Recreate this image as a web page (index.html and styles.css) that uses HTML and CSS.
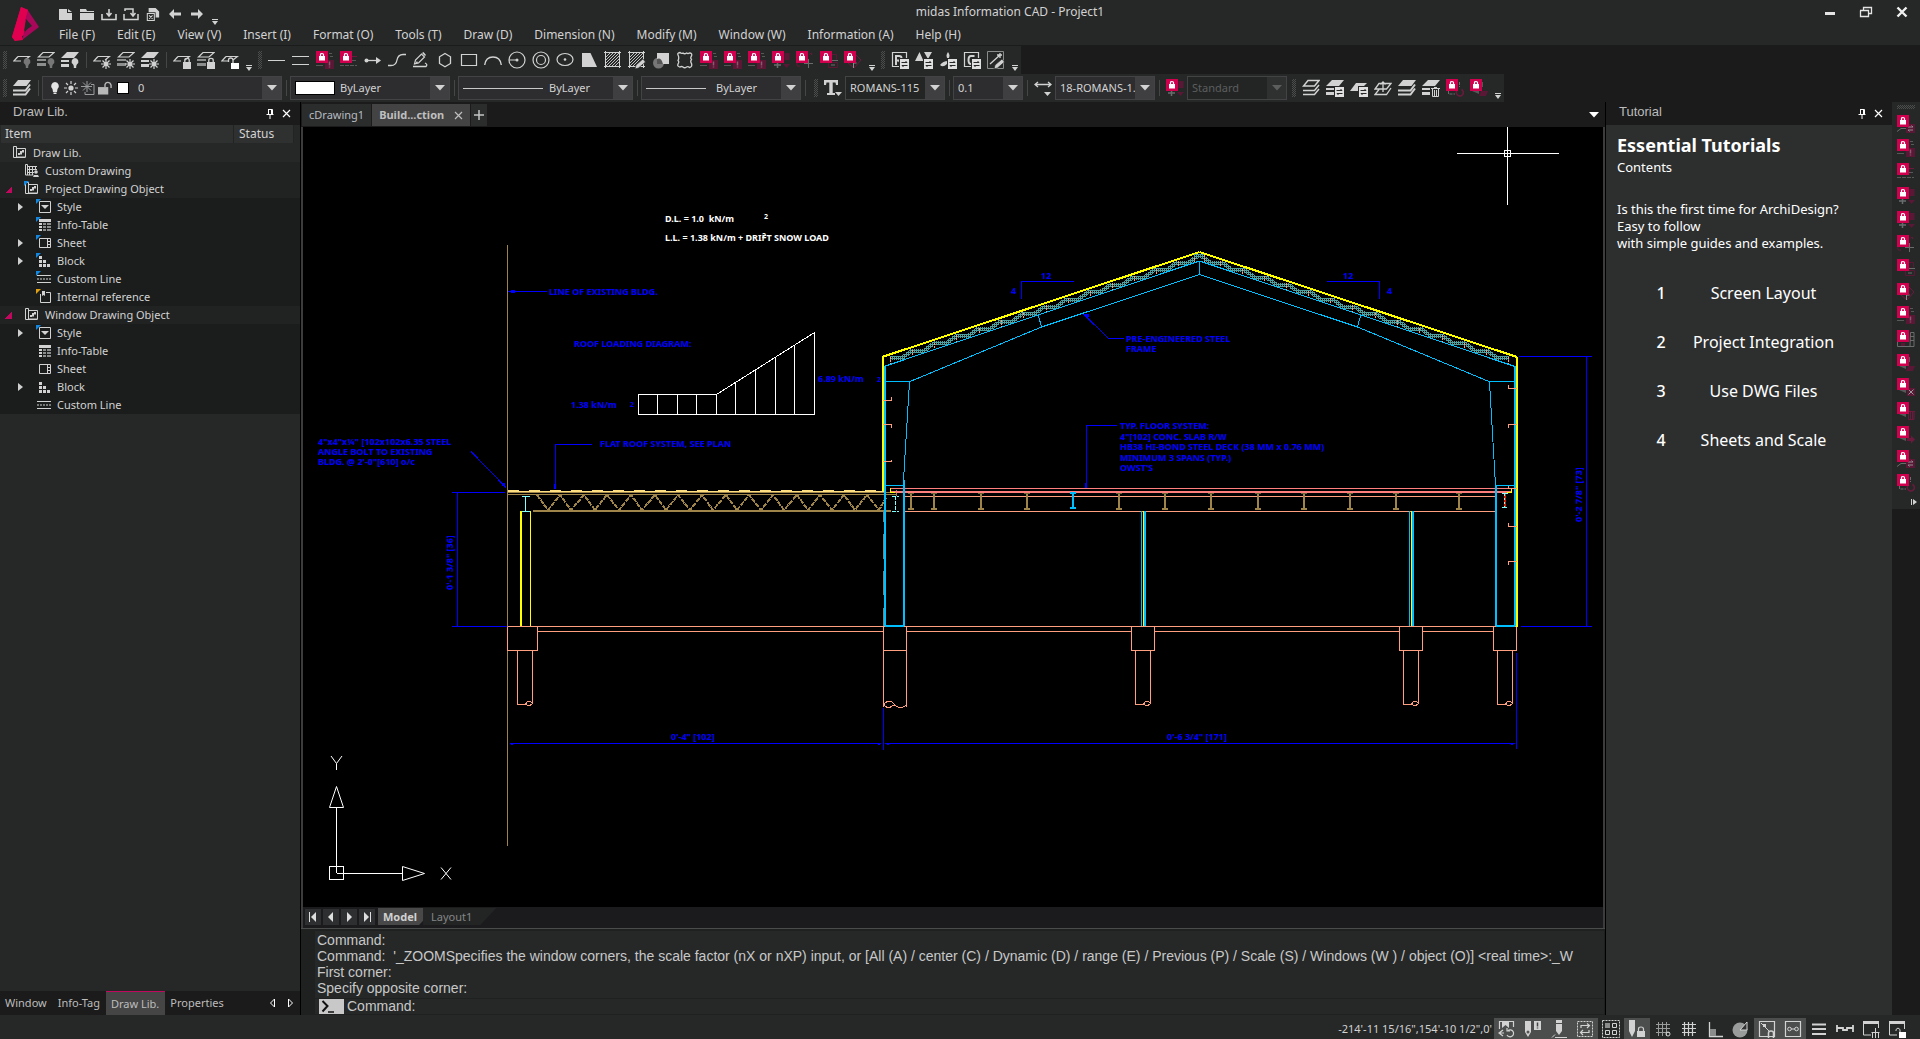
FILE: index.html
```html
<!DOCTYPE html>
<html lang="en">
<head>
<meta charset="utf-8">
<title>midas Information CAD - Project1</title>
<link rel="stylesheet" href="styles.css">
</head>
<body>
<svg class="defs" aria-hidden="true">
  <!-- generic glyphs -->
  <symbol id="down" viewBox="0 0 10 6"><path d="M0 0h10L5 5.500z" fill="currentColor"/></symbol>
  <symbol id="more" viewBox="0 0 6 6"><path d="M0 0h6v1H0zM0 2h6L3 6z" fill="currentColor"/></symbol>
  <symbol id="pin" viewBox="0 0 8 10"><path d="M2 0.500h4.500v5M2.500 0v5.500M0.500 5.500h7M4 6v4M5.500 1v4.500" fill="none" stroke="currentColor"/></symbol>
  <symbol id="x" viewBox="0 0 9 9"><path d="M1 1l7 7M8 1L1 8" fill="none" stroke="currentColor" stroke-width="1.200"/></symbol>
  <symbol id="lock" viewBox="0 0 12 12"><path d="M0 0h12v12H0z" fill="#d1004f"/><path d="M3 5h6v4.500H3z" fill="#fff"/><path d="M4.500 5V3.500q0-1 1.500-1t1.500 1V5" fill="none" stroke="#fff" stroke-width="1.200"/></symbol>

  <!-- quick access -->
  <symbol id="q-new" viewBox="0 0 16 14"><path d="M2 2h8v4h5v7H2zM11 2l4 3h-4z" fill="currentColor"/></symbol>
  <symbol id="q-open" viewBox="0 0 16 14"><path d="M1 2h6l1 2h7v1H1zM1 6h14v7H1z" fill="currentColor"/></symbol>
  <symbol id="q-save" viewBox="0 0 16 14"><path d="M1 7v5.500h14V7M8 2v6M5.500 6L8 9l2.500-3M4 12" fill="none" stroke="currentColor" stroke-width="1.600"/></symbol>
  <symbol id="q-saveas" viewBox="0 0 16 14"><path d="M1 7v5.500h14V7M2 4V2h8v6M7.500 6L10 9l2.500-3" fill="none" stroke="currentColor" stroke-width="1.500"/></symbol>
  <symbol id="q-close" viewBox="0 0 16 16"><path d="M3 1h8l4 4v7h-4V6H3z" fill="currentColor"/><path d="M1.500 7.500h8v8h-8zM3.500 9.500l4 4M7.500 9.500l-4 4" fill="none" stroke="currentColor" stroke-width="1.200"/></symbol>
  <symbol id="q-left" viewBox="0 0 16 14"><path d="M2 7l5-5v3.500h7v3H7V12z" fill="currentColor"/></symbol>
  <symbol id="q-right" viewBox="0 0 16 14"><path d="M14 7L9 2v3.500H2v3h7V12z" fill="currentColor"/></symbol>

  <!-- layer tools -->
  <symbol id="sheet" viewBox="0 0 18 18"><path d="M5 5.500h11.500L12 9M5 5.500L.8 10H8" fill="none" stroke="currentColor" stroke-width="1.200"/></symbol>
  <symbol id="stack" viewBox="0 0 18 18"><path d="M6 1.500h11L12 6H1.500z" fill="none" stroke="currentColor" stroke-width="1.200"/><path d="M0 8h9v2H0zM0 12h9v3H0z" fill="currentColor" opacity=".6"/></symbol>
  <symbol id="stackf" viewBox="0 0 18 18"><path d="M6 1h12l-5 6H0zM0 9h8v2H0zM0 13h8v3H0z" fill="currentColor"/></symbol>
  <symbol id="b-bulb" viewBox="0 0 18 18"><path d="M14 7a3.500 3.500 0 0 1 2 6.300l-.8 1.700v2h-2.400v-2l-.8-1.700A3.500 3.500 0 0 1 14 7z" fill="currentColor"/></symbol>
  <symbol id="b-sun" viewBox="0 0 18 18"><path d="M13 8v10M8 13h10M9.500 9.500l7 7M16.500 9.500l-7 7" stroke="currentColor" stroke-width="1.200"/><circle cx="13" cy="13" r="2" fill="currentColor"/></symbol>
  <symbol id="b-lock" viewBox="0 0 18 18"><path d="M10 11h8v7h-8z" fill="currentColor"/><path d="M11.800 11V9q0-1.700 2.200-1.700T16.200 9v2" fill="none" stroke="currentColor" stroke-width="1.300"/></symbol>
  <symbol id="b-unlock" viewBox="0 0 18 18"><path d="M10 12h8v6h-8z" fill="#fff"/><path d="M7.500 11V9q0-2 2.200-2T12 9v3" fill="none" stroke="currentColor" stroke-width="1.300"/></symbol>
  <symbol id="b-swap" viewBox="0 0 18 18"><path d="M8 7h10v11H8z" fill="#262828"/><path d="M9 8h9v10H9z" fill="#e0e0e0"/><path d="M10.500 11.500H16l-1.500-1.500M16.500 14.500h-5.500l1.500 1.500" fill="none" stroke="#262828"/></symbol>
  <symbol id="b-trash" viewBox="0 0 18 18"><path d="M9 9.500h9M12 8.500h3M10.500 10v7.500h6V10M12.500 11v6M14.500 11v6" fill="none" stroke="currentColor"/></symbol>
  <symbol id="layers" viewBox="0 0 18 18"><path d="M5 1h13l-4.500 6H0z" fill="currentColor"/><path d="M0 11.500h12.500L17 5.500M0 15.500h12.500L17 9.500" fill="none" stroke="currentColor" stroke-width="2"/></symbol>
  <symbol id="layerso" viewBox="0 0 18 18"><path d="M6 1.500h11L12.500 7H1.500zM1 11.500h11.500L17 6M1 15.500h11.500L17 10" fill="none" stroke="currentColor" stroke-width="1.500"/></symbol>
  <symbol id="layersup" viewBox="0 0 18 18"><path d="M5 4.500h12L12.500 10H1zM5 10.500L1 15.500h11.500L17 9M9 13V3M6.500 5.500L9 3l2.500 2.500" fill="none" stroke="currentColor" stroke-width="1.300"/></symbol>

  <!-- draw tools -->
  <symbol id="d-line" viewBox="0 0 18 18"><path d="M0 9.500h17" stroke="currentColor"/></symbol>
  <symbol id="d-dbl" viewBox="0 0 18 18"><path d="M0 5.500h17M0 13.500h17" stroke="currentColor" stroke-width="1.200"/></symbol>
  <symbol id="d-ray" viewBox="0 0 18 18"><path d="M1 9.500h14" stroke="currentColor" stroke-width="1.300"/><circle cx="2.500" cy="9.500" r="2" fill="currentColor"/><path d="M12 6l5 3.500-5 3.500z" fill="currentColor"/></symbol>
  <symbol id="d-spline" viewBox="0 0 18 18"><path d="M0 14.500h3q5 0 6-5.500t6-5.500h3" fill="none" stroke="currentColor" stroke-width="1.300"/></symbol>
  <symbol id="d-free" viewBox="0 0 18 18"><path d="M1 15.500h13q2-2-1-3.500" fill="none" stroke="currentColor" stroke-width="1.300"/><path d="M2.500 13l1-4 6-6 3 3-6 6z" fill="none" stroke="currentColor" stroke-width="1.200"/><path d="M3 13l2-3 1 2zM10 2l1.500-1 2.500 3-1 1z" fill="currentColor"/></symbol>
  <symbol id="d-hex" viewBox="0 0 18 18"><path d="M9 2.500l5.500 3.300v6.700L9 15.800l-5.500-3.300V5.800z" fill="none" stroke="currentColor" stroke-width="1.300"/></symbol>
  <symbol id="d-rect" viewBox="0 0 18 18"><path d="M1.500 3.500h15v11h-15z" fill="none" stroke="currentColor" stroke-width="1.200"/></symbol>
  <symbol id="d-arc" viewBox="0 0 18 18"><path d="M.7 14q1-8 8.300-8t8.300 8" fill="none" stroke="currentColor" stroke-width="1.400"/></symbol>
  <symbol id="d-circ" viewBox="0 0 18 18"><circle cx="9" cy="9" r="8" fill="none" stroke="currentColor" stroke-width="1.200"/><path d="M1 9h7" stroke="currentColor"/><circle cx="9" cy="9" r="1.500" fill="currentColor"/></symbol>
  <symbol id="d-donut" viewBox="0 0 18 18"><circle cx="9" cy="9" r="8" fill="none" stroke="currentColor" stroke-width="1.200"/><circle cx="9" cy="9" r="4.500" fill="none" stroke="currentColor" stroke-width="1.200"/></symbol>
  <symbol id="d-ell" viewBox="0 0 18 18"><ellipse cx="9" cy="8.500" rx="8" ry="6" fill="none" stroke="currentColor" stroke-width="1.200"/><circle cx="9" cy="8.500" r="1.300" fill="currentColor"/></symbol>
  <symbol id="d-solid" viewBox="0 0 18 18"><path d="M2 2h8.500L17 16H2z" fill="currentColor"/></symbol>
  <symbol id="d-hatch" viewBox="0 0 18 18"><path d="M1.500 1.500h14v14h-14zM0 1.500h17M0 15.500h17M1.500 0v17M15.500 0v17" fill="none" stroke="currentColor"/><path d="M2 6l4-4M2 9l7-7M2 12l10-10M2 15L15 2M5 15L15 5M8 15l7-7M11 15l4-4" stroke="currentColor" stroke-width=".9"/></symbol>
  <symbol id="d-pen" viewBox="0 0 18 18"><path d="M7 18l1-4 7-6 2.500 3-7 6z" fill="currentColor" stroke="#262828" stroke-width=".7"/></symbol>
  <symbol id="d-wipe" viewBox="0 0 18 18"><circle cx="6.500" cy="12" r="5.500" fill="#777"/><path d="M5 2h12v11H5z" fill="currentColor"/><path d="M5 13V8q4-2 6 5z" fill="#555"/></symbol>
  <symbol id="d-cloud" viewBox="0 0 18 18"><path d="M2 4q-1-2 2-2.500 1.500 1.500 3 .5 1.500 1.500 3.500 0 1.500 1 3 0 3 0 2 3-1.500 2 0 3.500-1.500 2 0 4 1 3.500-2 4-1.500-1.500-3-.5-2 1.500-3.500 0-1.500-1-3 0Q1 15.500 2 13q1.500-2 0-3.500Q3.500 7 2 4z" fill="none" stroke="currentColor" stroke-width="1.300"/></symbol>

  <!-- unavailable tools: a dimmed glyph under the lock badge -->
  <symbol id="g-excl" viewBox="0 0 18 18"><path d="M0 14.500h7M14 5.500h3M13 2.500h3" stroke="#575959"/><path d="M9 9h9v9H9z" fill="#5b1736"/><path d="M13.500 10.500v4M13.500 15.500v1" stroke="#8d5870" stroke-width="1.500"/></symbol>
  <symbol id="g-line" viewBox="0 0 18 18"><path d="M12 5.500h5" stroke="#6b1a3d"/><path d="M12 9.500h5M0 14.500h17" stroke="#575959" stroke-dasharray="4 1"/></symbol>
  <symbol id="g-down" viewBox="0 0 18 18"><path d="M12.500 2h5v7h-5zM11 13h7l-3.500 4z" fill="#5b1736"/><path d="M5.500 12v5M2 14h7" stroke="#6a6c6c" stroke-width="1.500"/></symbol>
  <symbol id="g-plus" viewBox="0 0 18 18"><path d="M13.500 3q3-2 2 1M1 12q-1 4 3 3" fill="none" stroke="#6b1a3d"/><path d="M12.500 8v9M8 12.500h9" stroke="#6a6c6c"/></symbol>
  <symbol id="g-box" viewBox="0 0 18 18"><path d="M12 3.500h4.500v5M8.500 11.500h9v5h-9z" fill="none" stroke="#5b1736"/><path d="M12 9.500h6M11 14h4" stroke="#6a6c6c"/></symbol>
  <symbol id="g-dia" viewBox="0 0 18 18"><path d="M12 4l5 5-7 8-6-5" fill="none" stroke="#6b1a3d"/><path d="M9.500 17v-5h3" fill="none" stroke="#8a8c8c"/></symbol>
  <symbol id="g-grid" viewBox="0 0 18 18"><path d="M13.500 2.500h3.500v14h-4zM13 6.500h4M13 10.500h4M0.500 12v4.500h13" fill="none" stroke="#6a6c6c"/><path d="M4 13h4v3H4z" fill="#5b1736"/></symbol>
  <symbol id="g-tag" viewBox="0 0 18 18"><path d="M2 12l7 3v-3z" fill="#575959"/><path d="M11 12h7l-2 5H9z" fill="#5b1736"/><path d="M12.500 3v5" stroke="#575959"/></symbol>
  <symbol id="g-x" viewBox="0 0 18 18"><path d="M2 12l7 3v-3z" fill="#575959"/><path d="M10 10h8v8h-8z" fill="#5b1736"/><path d="M11.500 11.500l5 5M16.500 11.500l-5 5" stroke="#9a9c9c"/></symbol>
  <symbol id="g-trash" viewBox="0 0 18 18"><path d="M2 12l7 3v-3z" fill="#575959"/><path d="M11.500 10v7.500h5.500V10M10 9.500h8M13.500 10v7M15.500 10v7" fill="none" stroke="#6b1a3d"/></symbol>
  <symbol id="g-right" viewBox="0 0 18 18"><path d="M2 12l7 3v-3z" fill="#575959"/><path d="M10 12h4V9.500l4 4-4 4V15h-4z" fill="#6b1a3d"/></symbol>
  <symbol id="g-swap" viewBox="0 0 18 18"><path d="M0 16.500l4-3h5" fill="none" stroke="#6a6c6c"/><path d="M9 9h9v9H9z" fill="#5b1736"/><path d="M11 12h5l-1.500-1.500M16 15h-5l1.500 1.500" fill="none" stroke="#8d8f8f"/></symbol>
  <symbol id="g-undo" viewBox="0 0 18 18"><path d="M2.500 12v3H9M13.500 3v5" fill="none" stroke="#6a6c6c" stroke-dasharray="3 1"/><path d="M11 11.500a3.500 3.500 0 1 0 4.500-1" fill="none" stroke="#6b1a3d" stroke-width="1.500"/></symbol>

  <!-- style tools -->
  <symbol id="s-r" viewBox="0 0 18 18"><path d="M1.500 1.500h14v14h-14z" fill="none" stroke="currentColor" stroke-width="1.200"/><path d="M5 14V5h3q2.500 0 2.500 2.300T8 9.500H5M8 9.500l2.500 4.500" fill="none" stroke="currentColor" stroke-width="2"/></symbol>
  <symbol id="s-tri" viewBox="0 0 18 18"><path d="M0 10l4.500-9 4 9zM9 1h8l-4 7z" fill="currentColor"/></symbol>
  <symbol id="s-fan" viewBox="0 0 18 18"><path d="M9 1q3 4 0 7-3-3 0-7zM9 10l-1 3q-4 4-7 1 3-4 8-4z" fill="currentColor"/></symbol>
  <symbol id="s-c" viewBox="0 0 18 18"><path d="M1.500 1.500h14v14h-14z" fill="none" stroke="currentColor" stroke-width="1.200"/><path d="M11.500 5H8q-2.500 0-2.500 4T8 13h2" fill="none" stroke="currentColor" stroke-width="2"/></symbol>
  <symbol id="s-edit" viewBox="0 0 18 18"><path d="M.5.500h16v17H.5z" fill="none" stroke="#8a8c8c"/><path d="M3 13L13 4M10 4h5M13 2v5" stroke="currentColor" stroke-width="1.300"/></symbol>
  <symbol id="t-text" viewBox="0 0 18 18"><path d="M0 1h14v5h-2l-.5-2.500H8.700V14H11v2H3v-2h2.300V3.500H2.500L2 6H0z" fill="currentColor"/><path d="M11 13h7l-3.500 4z" fill="currentColor"/></symbol>
  <symbol id="t-dim" viewBox="0 0 18 18"><path d="M1 5.500h16M4 3L1 5.500 4 8M14 3l3 2.500L14 8" fill="none" stroke="currentColor" stroke-width="1.300"/><path d="M10 13h7l-3.500 4z" fill="currentColor"/></symbol>

  <!-- layer state -->
  <symbol id="l-bulb" viewBox="0 0 10 14"><path d="M5 1a4 4 0 0 1 2.500 7L7 11H3l-.5-3A4 4 0 0 1 5 1zM3.500 11.500h3V13h-3z" fill="#e4e4e4"/></symbol>
  <symbol id="l-sun" viewBox="0 0 14 14"><circle cx="7" cy="7" r="2.600" fill="currentColor"/><path d="M7 0v3M7 11v3M0 7h3M11 7h3M2 2l2 2M10 10l2 2M12 2l-2 2M2 12l2-2" stroke="currentColor" stroke-width="1.200"/></symbol>
  <symbol id="l-frz" viewBox="0 0 14 14"><path d="M6 0v11M0 5.500h11M2 1.500l8 8M10 1.500l-8 8M10 3.500h3v10H4V11" fill="none" stroke="#9a9c9c"/></symbol>
  <symbol id="l-unl" viewBox="0 0 15 14"><path d="M0 6h11v8H0z" fill="#b8b8b8"/><path d="M7.500 6V3.500Q8 1 10.500 1T14 4v3" fill="none" stroke="#b8b8b8" stroke-width="1.500"/></symbol>

  <!-- tree -->
  <symbol id="n-lib" viewBox="0 0 14 14"><path d="M3.500 2.500h9v8.500h-9zM.5.500h3V11M.5.500v11h12" fill="none" stroke="currentColor"/><path d="M5 9V7h2V5h2V4h2v2.500H9v2H7V9z" fill="currentColor"/></symbol>
  <symbol id="n-cust" viewBox="0 0 14 14"><path d="M.5.500h2V11M.5.500v10.500h8M3 2.500h9M4.500 2v9M7.500 2v9M10.500 2v4M3 5.500h9M3 8.500h6" fill="none" stroke="currentColor"/><circle cx="11" cy="8" r="1.800" fill="currentColor"/><path d="M8 13l1-2h4l1 2z" fill="currentColor"/></symbol>
  <symbol id="n-style" viewBox="0 0 14 14"><path d="M2.500 1.500h11v11h-11z" fill="none" stroke="currentColor"/><path d="M4 5h8L8 9z" fill="currentColor"/></symbol>
  <symbol id="n-table" viewBox="0 0 14 14"><path d="M2 1h12v3H2zM2 5h3v2H2zM2 8h3v2H2zM2 11h3v2H2z" fill="currentColor"/><path d="M6 5h3v2H6zM10 5h4v2h-4zM6 8h3v2H6zM10 8h4v2h-4zM6 11h3v2H6zM10 11h4v2h-4z" fill="#8c8e8e"/></symbol>
  <symbol id="n-sheet" viewBox="0 0 14 14"><path d="M2.500 2.500h11v9h-11zM10.500 2v10M10.500 5.500h3M10.500 8.500h3" fill="none" stroke="currentColor"/></symbol>
  <symbol id="n-block" viewBox="0 0 14 14"><path d="M2 2h3v3H2zM2 6h3v3H2zM6 6h3v3H6zM2 10h3v3H2zM6 10h3v3H6zM10 10h3v3h-3z" fill="currentColor"/></symbol>
  <symbol id="n-line" viewBox="0 0 14 14"><path d="M0 3.500h14M0 10.500h14" stroke="currentColor"/><path d="M0 7h14" stroke="currentColor" stroke-dasharray="2 1"/></symbol>
  <symbol id="n-ref" viewBox="0 0 14 14"><path d="M9 2.500h4.500v10h-10V4" fill="none" stroke="currentColor"/><path d="M5 1h3v5L6.500 5 5 6z" fill="currentColor"/></symbol>

  <!-- status bar -->
  <symbol id="z1" viewBox="0 0 18 18"><path d="M4 1h7v7L7.500 5 4 8zM1 13h6" fill="currentColor"/><path d="M1.500 9V1.500H4M11 1.500h4.500V7M5 10L1 13l4 3M1 13h5M9 15a3.500 3.500 0 1 0 1-4.500M9 8v3h3" fill="none" stroke="currentColor" stroke-width="1.200"/></symbol>
  <symbol id="z2" viewBox="0 0 18 18"><path d="M1 1h6v11l-3 5-3-5zM10 1h7v9h-7z" fill="currentColor"/><circle cx="4" cy="12" r="1.500" fill="#555"/><path d="M13.500 2.500v4M13.500 7.500v1" stroke="#444" stroke-width="1.500"/></symbol>
  <symbol id="z3" viewBox="0 0 18 18"><path d="M6 0h6v3H6zM6 4h6v7l-3 4-3-4z" fill="currentColor"/><path d="M2 17.500l3-3M5 17.500h12" stroke="currentColor"/></symbol>
  <symbol id="z4" viewBox="0 0 18 18"><path d="M1.500 1.500h15v15h-15z" fill="none" stroke="currentColor" stroke-dasharray="2 1"/><path d="M5 8V5.500h8M11 3.500l2.500 2L11 8M13 10v2.500H5M7 10l-2.500 2.500L7 15" fill="none" stroke="currentColor" stroke-width="1.200"/></symbol>
  <symbol id="z5" viewBox="0 0 18 18"><path d="M.5.500h17v17H.5z" fill="none" stroke="currentColor" stroke-dasharray="2 1"/><path d="M3 3h5v5H3z" fill="#8a8c8c"/><path d="M10.500 3.500h4v4h-4zM3.500 10.500h4v4h-4zM10.500 10.500h4v4h-4z" fill="none" stroke="currentColor"/></symbol>
  <symbol id="z6" viewBox="0 0 18 18"><path d="M1 0h6v11l-3 6-3-6zM9 11h8v6H9z" fill="currentColor"/><path d="M10.500 11V9q0-2 2.500-2t2.500 2v2" fill="none" stroke="currentColor" stroke-width="1.200"/></symbol>
  <symbol id="z7" viewBox="0 0 18 18"><path d="M4.500 2v14M8.500 2v14M12.500 2v14M2 4.500h14M2 8.500h14M2 12.500h14" stroke="#9a9c9c"/><circle cx="14" cy="14" r="2" fill="none" stroke="currentColor"/></symbol>
  <symbol id="z8" viewBox="0 0 18 18"><path d="M4.500 2v14M8.500 2v14M12.500 2v14M2 4.500h14M2 8.500h14M2 12.500h14" stroke="currentColor" stroke-width="1.200"/></symbol>
  <symbol id="z9" viewBox="0 0 18 18"><path d="M3.500 2v14.500H17" fill="none" stroke="currentColor" stroke-width="1.300"/><path d="M4 9h6v7H4z" fill="#8a8c8c"/></symbol>
  <symbol id="z10" viewBox="0 0 18 18"><circle cx="8" cy="10" r="7.500" fill="#9a9c9c"/><path d="M8 10l7-8v8H8z" fill="#333" stroke="currentColor"/></symbol>
  <symbol id="z11" viewBox="0 0 18 18"><path d="M1.500 1.500h15v15h-15z" fill="none" stroke="currentColor" stroke-width="1.200"/><path d="M3 3l8 8" stroke="currentColor"/><path d="M5 4h3v3H5z" fill="currentColor"/><path d="M10.500 18v-5q0-2 2.500-2t2.500 2v5" fill="none" stroke="currentColor" stroke-width="1.500"/></symbol>
  <symbol id="z12" viewBox="0 0 18 18"><path d="M1.500 1.500h15v15h-15zM7 9h4" fill="none" stroke="currentColor" stroke-width="1.200"/><circle cx="5.500" cy="9" r="1.800" fill="none" stroke="currentColor"/><circle cx="12.500" cy="9" r="1.800" fill="none" stroke="currentColor"/></symbol>
  <symbol id="z13" viewBox="0 0 18 18"><path d="M2 4.500h14M2 9h14M2 14h14" stroke="currentColor" stroke-width="2"/></symbol>
  <symbol id="z14" viewBox="0 0 18 18"><path d="M1 5v7M1 8h6v2h4V8h6M17 5v7" fill="none" stroke="currentColor" stroke-width="1.800"/></symbol>
  <symbol id="z15" viewBox="0 0 18 18"><path d="M1 1h16v3H1z" fill="currentColor"/><path d="M1.500 3v12H9M16.500 3v5M13.500 8v4M9.500 12.500h8M10.500 13v5M13.500 13v5M16.500 13v5" fill="none" stroke="currentColor"/></symbol>
  <symbol id="z16" viewBox="0 0 18 18"><path d="M1 1h16v3H1z" fill="currentColor"/><path d="M1.500 3v12H9M16.500 3v6M8 11V9.500q2-3 4 0V12" fill="none" stroke="currentColor"/><path d="M11 12h7v6h-7z" fill="#fff"/></symbol>
</svg>

<header class="titlebar">
  <svg class="logo" viewBox="0 0 28 34"><path d="M9 0l7 3-4 25-9 6-3-4z" fill="#e0004f"/><path d="M15 2l12 18-17 13 2-7 6-7-5-6z" fill="#a8075a"/><path d="M14 12l6 7-8 5z" fill="#262828"/><path d="M9 0l7 3-3 10-4 13 2 7-8 1-3-4z" fill="#e0004f"/></svg>
  <div class="head">
    <div class="toprow">
      <div class="quick">
        <button aria-label="New"><svg><use href="#q-new"/></svg></button>
        <button aria-label="Open"><svg><use href="#q-open"/></svg></button>
        <button aria-label="Save"><svg><use href="#q-save"/></svg></button>
        <button aria-label="Save as"><svg><use href="#q-saveas"/></svg></button>
        <button aria-label="Close file"><svg><use href="#q-close"/></svg></button>
        <button aria-label="Undo"><svg><use href="#q-left"/></svg></button>
        <button aria-label="Redo"><svg><use href="#q-right"/></svg></button>
        <button class="more" aria-label="More"><svg><use href="#more"/></svg></button>
      </div>
      <div class="apptitle">midas Information CAD - Project1</div>
      <div class="winbtns">
        <button aria-label="Minimize"><svg viewBox="0 0 14 12"><path d="M2 6h10v3H2z" fill="#e4e4e4"/></svg></button>
        <button aria-label="Restore"><svg viewBox="0 0 14 12"><path d="M4.500 4V1.500h8v6H10M4 1.500h9M1 4.500h8.500v6h-8v-6" fill="none" stroke="#e4e4e4" stroke-width="1.300"/></svg></button>
        <button aria-label="Close"><svg viewBox="0 0 14 12"><path d="M2.500 1.500l9 9M11.500 1.500l-9 9" stroke="#f0f0f0" stroke-width="2.400"/></svg></button>
      </div>
    </div>
    <nav class="menu">
      <button>File (F)</button><button>Edit (E)</button><button>View (V)</button><button>Insert (I)</button><button>Format (O)</button><button>Tools (T)</button><button>Draw (D)</button><button>Dimension (N)</button><button>Modify (M)</button><button>Window (W)</button><button>Information (A)</button><button>Help (H)</button>
    </nav>
  </div>
</header>

<div class="toolrow">
  <div class="toolbar">
    <i class="grip"></i>
    <button class="tb" aria-label="Layer off"><svg><use href="#sheet"/><use href="#b-bulb" color="#777"/></svg></button>
    <button class="tb" aria-label="Layers off"><svg><use href="#stack"/><use href="#b-bulb" color="#777"/></svg></button>
    <button class="tb" aria-label="Layers on"><svg><use href="#stackf"/><use href="#b-bulb"/></svg></button>
    <i class="sep"></i>
    <button class="tb" aria-label="Freeze layer"><svg><use href="#sheet"/><use href="#b-sun"/></svg></button>
    <button class="tb" aria-label="Freeze layers"><svg><use href="#stack"/><use href="#b-sun"/></svg></button>
    <button class="tb" aria-label="Thaw layers"><svg><use href="#stackf"/><use href="#b-sun"/></svg></button>
    <i class="sep"></i>
    <button class="tb" aria-label="Lock layer"><svg><use href="#sheet"/><use href="#b-lock"/></svg></button>
    <button class="tb" aria-label="Lock layers"><svg><use href="#stack"/><use href="#b-lock"/></svg></button>
    <button class="tb" aria-label="Unlock layer"><svg><use href="#sheet"/><use href="#b-unlock"/></svg></button>
    <button class="more" aria-label="More"><svg><use href="#more"/></svg></button>
    <i class="grip"></i>
    <button class="tb" aria-label="Line"><svg><use href="#d-line"/></svg></button>
    <button class="tb" aria-label="Double line"><svg><use href="#d-dbl"/></svg></button>
    <button class="tb" aria-label="Wall"><svg><use href="#g-excl"/><use href="#lock" width="12" height="12"/></svg></button>
    <button class="tb" aria-label="Custom line"><svg><use href="#g-line"/><use href="#lock" width="12" height="12"/></svg></button>
    <button class="tb" aria-label="Ray"><svg><use href="#d-ray"/></svg></button>
    <button class="tb" aria-label="Spline"><svg><use href="#d-spline"/></svg></button>
    <button class="tb" aria-label="Freehand"><svg><use href="#d-free"/></svg></button>
    <button class="tb" aria-label="Polygon"><svg><use href="#d-hex"/></svg></button>
    <button class="tb" aria-label="Rectangle"><svg><use href="#d-rect"/></svg></button>
    <button class="tb" aria-label="Arc"><svg><use href="#d-arc"/></svg></button>
    <button class="tb" aria-label="Circle"><svg><use href="#d-circ"/></svg></button>
    <button class="tb" aria-label="Donut"><svg><use href="#d-donut"/></svg></button>
    <button class="tb" aria-label="Ellipse"><svg><use href="#d-ell"/></svg></button>
    <button class="tb" aria-label="Solid"><svg><use href="#d-solid"/></svg></button>
    <button class="tb" aria-label="Hatch"><svg><use href="#d-hatch"/></svg></button>
    <button class="tb" aria-label="Edit hatch"><svg><use href="#d-hatch"/><use href="#d-pen"/></svg></button>
    <button class="tb" aria-label="Wipeout"><svg><use href="#d-wipe"/></svg></button>
    <button class="tb" aria-label="Revision cloud"><svg><use href="#d-cloud"/></svg></button>
    <button class="tb" aria-label="Block info"><svg><use href="#g-excl"/><use href="#lock" width="12" height="12"/></svg></button>
    <button class="tb" aria-label="Sheet info"><svg><use href="#g-excl"/><use href="#lock" width="12" height="12"/></svg></button>
    <button class="tb" aria-label="Quick info"><svg><use href="#g-excl"/><use href="#lock" width="12" height="12"/></svg></button>
    <button class="tb" aria-label="Symbol"><svg><use href="#g-down"/><use href="#lock" width="12" height="12"/></svg></button>
    <button class="tb" aria-label="Axis"><svg><use href="#g-plus"/><use href="#lock" width="12" height="12"/></svg></button>
    <button class="tb" aria-label="Section"><svg><use href="#g-box"/><use href="#lock" width="12" height="12"/></svg></button>
    <button class="tb" aria-label="Elevation"><svg><use href="#g-dia"/><use href="#lock" width="12" height="12"/></svg></button>
    <button class="more" aria-label="More"><svg><use href="#more"/></svg></button>
    <i class="grip"></i>
    <button class="tb" aria-label="Room"><svg><use href="#s-r"/><use href="#b-swap"/></svg></button>
    <button class="tb" aria-label="Marks"><svg><use href="#s-tri"/><use href="#b-swap"/></svg></button>
    <button class="tb" aria-label="Plants"><svg><use href="#s-fan"/><use href="#b-swap"/></svg></button>
    <button class="tb" aria-label="Columns"><svg><use href="#s-c"/><use href="#b-swap"/></svg></button>
    <button class="tb" aria-label="Edit style"><svg><use href="#s-edit"/><use href="#d-pen"/></svg></button>
    <button class="more" aria-label="More"><svg><use href="#more"/></svg></button>
  </div>
</div>

<div class="toolrow">
  <div class="toolbar">
    <i class="grip"></i>
    <button class="tb" aria-label="Layers"><svg><use href="#layers"/></svg></button>
    <i class="sep"></i>
    <div class="combo w240">
      <svg class="st bulb"><use href="#l-bulb"/></svg><svg class="st"><use href="#l-sun"/></svg><svg class="st"><use href="#l-frz"/></svg><svg class="st"><use href="#l-unl"/></svg><i class="sw"></i>
      <select aria-label="Layer"><option>0</option></select><span class="caret"><svg><use href="#down"/></svg></span>
    </div>
    <i class="sep"></i>
    <div class="combo w160"><i class="white"></i><select aria-label="Color"><option>ByLayer</option></select><span class="caret"><svg><use href="#down"/></svg></span></div>
    <i class="sep"></i>
    <div class="combo w175"><i class="rule long"></i><select aria-label="Linetype"><option>ByLayer</option></select><span class="caret"><svg><use href="#down"/></svg></span></div>
    <i class="sep"></i>
    <div class="combo w160"><i class="rule"></i><select aria-label="Lineweight"><option>ByLayer</option></select><span class="caret"><svg><use href="#down"/></svg></span></div>
    <i class="sep"></i>
    <i class="grip wide"></i>
    <button class="tb" aria-label="Text style"><svg><use href="#t-text"/></svg></button>
    <div class="combo w100 dark"><select aria-label="Text style name"><option>ROMANS-115</option></select><span class="caret"><svg><use href="#down"/></svg></span></div>
    <i class="sep"></i>
    <div class="combo w70"><select aria-label="Text height"><option>0.1</option></select><span class="caret"><svg><use href="#down"/></svg></span></div>
    <i class="sep"></i>
    <button class="tb" aria-label="Dimension style"><svg><use href="#t-dim"/></svg></button>
    <div class="combo w100"><select aria-label="Dimension style name"><option>18-ROMANS-1..</option></select><span class="caret"><svg><use href="#down"/></svg></span></div>
    <i class="sep"></i>
    <button class="tb" aria-label="Symbol style"><svg><use href="#g-down"/><use href="#lock" width="12" height="12"/></svg></button>
    <div class="combo w100 dark off"><select aria-label="Symbol style name" disabled><option>Standard</option></select><span class="caret"><svg><use href="#down"/></svg></span></div>
    <i class="grip wide"></i>
    <button class="tb" aria-label="Layer manager"><svg><use href="#layerso"/></svg></button>
    <button class="tb" aria-label="Layer match"><svg><use href="#stackf"/><use href="#b-swap"/></svg></button>
    <button class="tb" aria-label="Layer change"><svg><path d="M6 4h11l-4 4H9v4H0z" fill="currentColor"/><use href="#b-swap"/></svg></button>
    <button class="tb" aria-label="Layer current"><svg><use href="#layersup"/></svg></button>
    <button class="tb" aria-label="Layer merge"><svg><use href="#layers"/></svg></button>
    <button class="tb" aria-label="Layer delete"><svg><use href="#stackf"/><use href="#b-trash"/></svg></button>
    <button class="tb" aria-label="Restore"><svg><use href="#g-undo"/><use href="#lock" width="12" height="12"/></svg></button>
    <button class="tb" aria-label="Order"><svg><use href="#g-tag"/><use href="#lock" width="12" height="12"/></svg></button>
    <button class="more" aria-label="More"><svg><use href="#more"/></svg></button>
  </div>
</div>

<main>
  <aside class="lib">
    <div class="ptitle"><h2>Draw Lib.</h2><button aria-label="Pin"><svg class="pin"><use href="#pin"/></svg></button><button aria-label="Close panel"><svg class="cx"><use href="#x"/></svg></button></div>
    <div class="cols"><span class="c1">Item</span><span class="c2">Status</span></div>
    <ul class="tree">
      <li class="r0"><svg class="ni"><use href="#n-lib"/></svg>Draw Lib.</li>
      <li class="r1"><svg class="ni"><use href="#n-cust"/></svg>Custom Drawing</li>
      <li class="r1 open tag"><svg class="ni"><use href="#n-lib"/></svg>Project Drawing Object</li>
      <li class="r2 has tag"><svg class="ni"><use href="#n-style"/></svg>Style</li>
      <li class="r2 tag"><svg class="ni"><use href="#n-table"/></svg>Info-Table</li>
      <li class="r2 has tag"><svg class="ni"><use href="#n-sheet"/></svg>Sheet</li>
      <li class="r2 has tag"><svg class="ni"><use href="#n-block"/></svg>Block</li>
      <li class="r2 tag"><svg class="ni"><use href="#n-line"/></svg>Custom Line</li>
      <li class="r2 tag gold"><svg class="ni"><use href="#n-ref"/></svg>Internal reference</li>
      <li class="r1 open"><svg class="ni"><use href="#n-lib"/></svg>Window Drawing Object</li>
      <li class="r2 has tag"><svg class="ni"><use href="#n-style"/></svg>Style</li>
      <li class="r2"><svg class="ni"><use href="#n-table"/></svg>Info-Table</li>
      <li class="r2"><svg class="ni"><use href="#n-sheet"/></svg>Sheet</li>
      <li class="r2 has"><svg class="ni"><use href="#n-block"/></svg>Block</li>
      <li class="r2"><svg class="ni"><use href="#n-line"/></svg>Custom Line</li>
    </ul>
    <div class="ltabs">
      <button>Window</button><button>Info-Tag</button><button class="on">Draw Lib.</button><button>Properties</button>
      <span class="arrows"><svg viewBox="0 0 8 10"><path d="M5.500 1v8L1.500 5z" fill="none" stroke="#fff"/></svg><svg viewBox="0 0 8 10"><path d="M1.500 1v8l4-4z" fill="none" stroke="#fff"/></svg></span>
    </div>
  </aside>

  <section class="work">
    <div class="dtabs">
      <button>cDrawing1</button><button class="on">Build...ction<svg class="cx"><use href="#x"/></svg></button><button class="add" aria-label="New tab"><svg viewBox="0 0 10 10"><path d="M5 0v10M0 5h10" stroke="#c4c4c4" stroke-width="1.500"/></svg></button>
      <button class="all" aria-label="All tabs"><svg><use href="#down"/></svg></button>
    </div>
    <div class="frame">
      <svg class="drawing" viewBox="303 127 1300 780">
        <defs>
          <pattern id="ins" width="2" height="2" patternUnits="userSpaceOnUse"><path d="M0 0h2v1H0zM0 1h1v1H0z" fill="#4f9f9f"/></pattern>
          <g id="joist"><path d="M0 0v16" class="brn w2"/><path d="M-3 .500h6" stroke="#6b6632"/><path d="M-3 15.500h6" class="brn w2"/></g>
          <g id="halfroof">
            <path stroke="url(#ins)" stroke-width="4" d="M890 358h12l10-7.300h12l10-7.300h12l10-7.300h12l10-7.300h12l10-7.300h12l10-7.300h12l10-7.300h12l10-7.300h12l10-7.300h12l10-7.300h12l10-7.300h12l10-7.300h12l10-7.300h12l10-7.300h7"/>
            <path class="sal" stroke-dasharray="2 1" d="M890.500 357v7M912.500 350v7M934.500 343v6M956.500 335v7M979.500 328v7M1001.500 320v7M1023.500 313v7M1046.500 305v7M1068.500 298v7M1090.500 291v6M1112.500 283v7M1134.500 276v7M1156.500 269v6M1178.500 261v7M1194.500 255v7"/>
            <path class="yel w2" d="M882 357L1199.500 252"/>
            <path class="sky" d="M884 366.500L1199.500 261M910 381.500L1041.500 327L1199.500 274.500M1038 314l3.500 13"/>
          </g>
        </defs>
        <g fill="none" stroke-width="1" shape-rendering="crispEdges">
          <path d="M507.500 245v601" class="brn"/>
          <g class="wht">
            <path d="M638.500 394.500h78L814.500 332.500v81.500h-176zM657.500 394v20M677.500 394v20M696.500 394v20M716.500 394v20M735.500 382v32M755.500 370v44M775.500 357v57M794.500 345v69"/>
            <path d="M1457 153.500h102M1507.500 127v78M1504.500 150.500h6v6h-6z"/>
            <path d="M329.500 866.500h14v13h-14zM336.500 873V807M336.500 873.500H402"/>
          </g>
          <g class="blu">
            <path d="M508 291.500h39M471 451.500l35 36M592 444.500h-36.500V489M452 492.500h53M452 626.500h55M457.500 493v133M510 743.500h371M885 743.500h630M883.500 708v42M1516.500 653v96M1519 356.500h73M1521 626.500h71M1586.500 357v269M1021.500 299v-17.500h52M1327 281.500h52.500V299M1083 313.500l25.500 25h15M1117 425.500h-30.500V489"/>
          </g>
          <path fill="#00f" d="M511 290h4v3h-4zM502 483h3v3h-3zM554 484h2v5h-2zM1085 483h2v5h-2zM1085 314h4v3h-4zM511 744h2v1h-2zM878 744h2v1h-2zM887 744h2v1h-2zM1511 744h2v1h-2z"/>
          <!-- flat roof and truss -->
          <path d="M508 492.500h388M508 494.500h388M896.500 490v6" class="brn"/>
          <path d="M508 491h376" stroke="#ffdf7f" stroke-width="2" stroke-dasharray="11 10"/>
          <path d="M508 491.500h376" stroke="#ffdf7f"/>
          <path d="M533 511h358" class="brn w2"/>
          <path class="brn w2" stroke-dasharray="5 1" d="M537 495l11 15l12-15l11 15l13-15l11 15l12-15l12 15l12-15l11 15l13-15l11 15l12-15l12 15l12-15l11 15l13-15l11 15l12-15l12 15l12-15l11 15l13-15l11 15l12-15l12 15l12-15l11 15l12-15l12 15l7-12"/>
          <path d="M525.500 496v15M522 496.500h8M522 511.500h8" stroke="#7fffff"/>
          <path d="M521 511v115" class="yel w2"/><path d="M530.500 511v115" class="yel"/>
          <!-- slab and piers -->
          <path class="sal" d="M508 626.500h1009M538 631.500h345M907 631.500h224M1155 631.500h244M1423 631.500h70M507.500 627v23.500h30V627M883.500 627v80M906.500 627v80M883 650.500h24M1131.500 627v23.500h23V627M1399.500 627v23.500h23V627M1493.500 627v23.500h23V627M517.500 651v53q4 2 8 0q4-6 7 0V651M525 704q4 3 7 0M883.500 705q6-8 11 0q6 5 12 0M883.500 705q5 5 10 0M1135.500 651v53q4 2 8 0q4-6 7 0V651M1143 704q4 3 7 0M1403.500 651v53q4 2 8 0q4-6 7 0V651M1411 704q4 3 7 0M1497.500 651v53q4 2 8 0q4-6 7 0V651M1505 704q4 3 7 0"/>
          <!-- roof -->
          <use href="#halfroof"/><use href="#halfroof" transform="translate(2399 0) scale(-1 1)"/>
          <path d="M1199.500 261v14" class="sky"/>
          <!-- floor -->
          <path d="M891 488.500h622" stroke="#ff7f7f"/><path d="M890 492h622" stroke="#ff7f7f" stroke-width="2"/>
          <path class="sal" d="M905 496.500h590M905 511.500h590"/>
          <use href="#joist" x="911" y="493"/><use href="#joist" x="934" y="493"/><use href="#joist" x="981" y="493"/><use href="#joist" x="1027" y="493"/><use href="#joist" x="1119" y="493"/><use href="#joist" x="1165" y="493"/><use href="#joist" x="1211" y="493"/><use href="#joist" x="1258" y="493"/><use href="#joist" x="1304" y="493"/><use href="#joist" x="1350" y="493"/><use href="#joist" x="1396" y="493"/><use href="#joist" x="1459" y="493"/>
          <path class="sky w2" d="M1073 493v15M1070 508h6M1070 493h6"/>
          <path d="M895.500 496v15M892 496.500h7M892 511.500h7" stroke="#7fffff" stroke-dasharray="4 1"/>
          <path d="M1505 494v13" stroke="#d02000" stroke-width="2"/><path d="M1504.500 494v13" stroke="#7fffff" stroke-dasharray="2 2"/><path d="M1502 493.500h6M1502 507.500h5" stroke="#7fffff"/>
          <!-- columns -->
          <path d="M883.500 511v115" stroke="#808080" stroke-dasharray="11 12 25 12 24 13 18"/>
          <path d="M883 357v134" class="yel w2"/><path d="M1517 357v270" class="yel w2"/>
          <path d="M890.500 488v4h4M1511.500 489v3h-5" class="yel"/>
          <path class="sky w2" d="M885 366v260M904 480v146M885 625.500h19M1496 485v141M1515 366v260M1496 625.500h19M1145 511v115M1413 511v115"/>
          <path class="sky" d="M885 381.500h25M909.500 382L903.500 480M885 485.500h19M1489 381.500h26M1489.500 382L1495.500 485M1496 485.500h19M1141.500 511v115M1409.500 511v115"/>
          <path class="yel" d="M1143.500 511v115M1411.500 511v115"/>
          <path class="sal" d="M883 400.500h8.500V397M883 424.500h8.500V428M883 461.500h8.500V460M1517 388.500h-8.500V385M1517 424.500h-8.500V428M1517 488.500h-8.500V486M1517 526.500h-8.500V523M1517 561.500h-8.500V565"/>
        </g>
        <g fill="none" stroke="#fff"><path d="M329.500 807.500h14l-7-21zM402.500 866.500v14l22-7zM331 756l5.500 7.500v6.500M342 756l-5.500 7.500M441 867.500l10 12M451 867.500l-10 12"/></g>
        <g class="note white"><text x="665" y="222">D.L. = 1.0&#160; kN/m</text><text x="665" y="241">L.L. = 1.38 kN/m + DRIFT SNOW LOAD</text><text class="sup" x="764" y="219">2</text><text class="sup" x="762" y="238">2</text></g>
        <g class="note">
          <text x="549" y="295">LINE OF EXISTING BLDG.</text>
          <text x="574" y="347">ROOF LOADING DIAGRAM:</text>
          <text x="818" y="382">6.89 kN/m</text><text class="sup" x="877" y="382">2</text>
          <text x="571" y="408">1.38 kN/m</text><text class="sup" x="630" y="407">2</text>
          <text x="318" y="445">4"x4"x¼" [102x102x6.35 STEEL</text>
          <text x="318" y="455">ANGLE BOLT TO EXISTING</text>
          <text x="318" y="465">BLDG. @ 2'-0"[610] o/c</text>
          <text x="600" y="447">FLAT ROOF SYSTEM, SEE PLAN</text>
          <text x="1041" y="279">12</text><text x="1011" y="294">4</text>
          <text x="1343" y="279">12</text><text x="1387" y="294">4</text>
          <text x="1126" y="342">PRE-ENGINEERED STEEL</text><text x="1126" y="352">FRAME</text>
          <text x="1120" y="429">TYP. FLOOR SYSTEM:</text>
          <text x="1120" y="440">4"[102] CONC. SLAB R/W</text>
          <text x="1120" y="450">HB38 HI-BOND STEEL DECK (38 MM x 0.76 MM)</text>
          <text x="1120" y="461">MINIMUM 3 SPANS (TYP.)</text>
          <text x="1120" y="471">OWST'S</text>
          <text x="671" y="740">0'-4" [102]</text>
          <text x="1167" y="740">0'-6 3/4" [171]</text>
          <text transform="translate(453 590) rotate(-90)">0'-1 3/8" [36]</text>
          <text transform="translate(1582 522) rotate(-90)">0'-2 7/8" [73]</text>
        </g>
      </svg>
    </div>
    <div class="mtabs">
      <button class="nav" aria-label="First"><svg viewBox="0 0 10 10"><path d="M1.500 0v10" stroke="#ddd"/><path d="M8 0v10L3 5z" fill="#ddd"/></svg></button>
      <button class="nav" aria-label="Previous"><svg viewBox="0 0 10 10"><path d="M7 0v10L2 5z" fill="#ddd"/></svg></button>
      <button class="nav" aria-label="Next"><svg viewBox="0 0 10 10"><path d="M3 0v10l5-5z" fill="#ddd"/></svg></button>
      <button class="nav" aria-label="Last"><svg viewBox="0 0 10 10"><path d="M8.500 0v10" stroke="#ddd"/><path d="M2 0v10l5-5z" fill="#ddd"/></svg></button>
      <button class="mt on">Model</button><button class="mt">Layout1</button>
    </div>
    <div class="cmd">
      <pre class="log">Command:
Command:  '_ZOOMSpecifies the window corners, the scale factor (nX or nXP) input, or [All (A) / center (C) / Dynamic (D) / range (E) / Previous (P) / Scale (S) / Windows (W ) / object (O)] &lt;real time&gt;:_W
First corner:
Specify opposite corner:</pre>
      <div class="prompt"><svg viewBox="0 0 25 15"><path d="M0 0h25v15H0z" fill="#c8c8c8"/><path d="M3.500 2l5 5-5 5.500" fill="none" stroke="#111" stroke-width="2"/><path d="M9 13h6" stroke="#111" stroke-width="1.500"/></svg><label for="cmd">Command:</label><input id="cmd" type="text"></div>
    </div>
  </section>

  <aside class="tut">
    <div class="ptitle"><h2>Tutorial</h2><button aria-label="Pin"><svg class="pin"><use href="#pin"/></svg></button><button aria-label="Close panel"><svg class="cx"><use href="#x"/></svg></button></div>
    <div class="tbody">
      <h1>Essential Tutorials</h1>
      <p class="sub">Contents</p>
      <p class="intro">Is this the first time for ArchiDesign?<br>Easy to follow<br>with simple guides and examples.</p>
      <ol>
        <li><b>1</b><a href="#layout">Screen Layout</a></li>
        <li><b>2</b><a href="#integration">Project Integration</a></li>
        <li><b>3</b><a href="#dwg">Use DWG Files</a></li>
        <li><b>4</b><a href="#scale">Sheets and Scale</a></li>
      </ol>
    </div>
  </aside>

  <div class="side">
    <div class="sidebar">
      <i class="hgrip"></i>
      <button class="tb" aria-label="Style swap"><svg><use href="#g-swap"/><use href="#lock" width="12" height="12"/></svg></button>
      <button class="tb" aria-label="Line info"><svg><use href="#g-excl"/><use href="#lock" width="12" height="12"/></svg></button>
      <button class="tb" aria-label="Custom line"><svg><use href="#g-line"/><use href="#lock" width="12" height="12"/></svg></button>
      <button class="tb" aria-label="Symbol style"><svg><use href="#g-down"/><use href="#lock" width="12" height="12"/></svg></button>
      <button class="tb" aria-label="Symbol"><svg><use href="#g-down"/><use href="#lock" width="12" height="12"/></svg></button>
      <button class="tb" aria-label="Axis"><svg><use href="#g-plus"/><use href="#lock" width="12" height="12"/></svg></button>
      <button class="tb" aria-label="Section"><svg><use href="#g-box"/><use href="#lock" width="12" height="12"/></svg></button>
      <button class="tb" aria-label="Elevation"><svg><use href="#g-dia"/><use href="#lock" width="12" height="12"/></svg></button>
      <button class="tb" aria-label="Block info"><svg><use href="#g-excl"/><use href="#lock" width="12" height="12"/></svg></button>
      <button class="tb" aria-label="Sheet form"><svg><use href="#g-grid"/><use href="#lock" width="12" height="12"/></svg></button>
      <button class="tb" aria-label="Tag layer"><svg><use href="#g-tag"/><use href="#lock" width="12" height="12"/></svg></button>
      <button class="tb" aria-label="Tag remove"><svg><use href="#g-x"/><use href="#lock" width="12" height="12"/></svg></button>
      <button class="tb" aria-label="Tag delete"><svg><use href="#g-trash"/><use href="#lock" width="12" height="12"/></svg></button>
      <button class="tb" aria-label="Tag move"><svg><use href="#g-right"/><use href="#lock" width="12" height="12"/></svg></button>
      <button class="tb" aria-label="Tag swap"><svg><use href="#g-swap"/><use href="#lock" width="12" height="12"/></svg></button>
      <button class="tb" aria-label="Tag restore"><svg><use href="#g-undo"/><use href="#lock" width="12" height="12"/></svg></button>
      <button class="smore" aria-label="More"><svg viewBox="0 0 6 6"><path d="M0 0h1v6H0zM2 0v6l4-3z" fill="currentColor"/></svg></button>
    </div>
  </div>
</main>

<footer class="status">
  <output>-214'-11 15/16",154'-10 1/2",0'</output>
  <button class="on" aria-label="Snap history"><svg><use href="#z1"/></svg></button><button class="on" aria-label="Pen alert"><svg><use href="#z2"/></svg></button><button class="on" aria-label="Pen height"><svg><use href="#z3"/></svg></button><button class="on" aria-label="Cycle selection"><svg><use href="#z4"/></svg></button><button aria-label="Group selection"><svg><use href="#z5"/></svg></button><button class="on" aria-label="Pen lock"><svg><use href="#z6"/></svg></button><button aria-label="Snap"><svg><use href="#z7"/></svg></button><button aria-label="Grid"><svg><use href="#z8"/></svg></button><button aria-label="Ortho"><svg><use href="#z9"/></svg></button><button aria-label="Polar"><svg><use href="#z10"/></svg></button><button class="on" aria-label="Object snap"><svg><use href="#z11"/></svg></button><button class="on" aria-label="Object track"><svg><use href="#z12"/></svg></button><button aria-label="Lineweight"><svg><use href="#z13"/></svg></button><button aria-label="Linetype"><svg><use href="#z14"/></svg></button><button aria-label="Clean screen"><svg><use href="#z15"/></svg></button><button aria-label="Lock screen"><svg><use href="#z16"/></svg></button>
</footer>
</body>
</html>
```
FILE: styles.css
```css
* { box-sizing: border-box; }
html, body { height: 100%; }
body {
  margin: 0;
  display: flex;
  flex-direction: column;
  min-height: 100vh;
  overflow: hidden;
  background: #1b1b1b;
  color: #d2d2d2;
  font: 12px/16px "Noto Sans", sans-serif;
}
button, select, input { font: inherit; color: inherit; }
button { background: none; border: 0; padding: 0; }
h1, h2, p, ul, ol, pre { margin: 0; padding: 0; }
svg { display: block; }
.defs { position: absolute; width: 0; height: 0; }

/* title bar and menu */
.titlebar { display: flex; height: 46px; background: #262828; border-bottom: 1px solid #1a1b1b; }
.logo { width: 28px; height: 34px; margin: 7px 18px 0 12px; }
.head { flex: 1; display: flex; flex-direction: column; }
.toprow { display: flex; align-items: flex-start; height: 27px; }
.quick { display: flex; align-items: center; height: 28px; width: 168px; margin-left: -4px; }
.quick button { width: 22px; display: flex; justify-content: center; }
.quick svg { width: 16px; height: 14px; }
.quick .more { width: 14px; height: 24px; }
.quick .more svg { width: 6px; height: 6px; }
.apptitle { flex: 1; padding-right: 14px; text-align: center; line-height: 24px; }
.winbtns { display: flex; }
.winbtns button { width: 36px; height: 24px; display: flex; align-items: center; justify-content: center; }
.winbtns svg { width: 14px; height: 12px; }
.menu { display: flex; gap: 22px; padding-left: 1px; }

/* toolbars */
.toolrow { display: flex; height: 28px; }
.toolbar { display: flex; align-items: center; background: #262828; }
.grip { width: 4px; height: 18px; margin: 0 3px; background: repeating-conic-gradient(#4c4e4e 0 25%, #262828 0 50%) 0 0 / 2px 2px; }
.grip.wide { margin: 0 3px 0 5px; }
.sep { width: 8px; height: 16px; background: linear-gradient(#454747, #454747) 4px 0 / 1px 100% no-repeat; }
.tb { width: 24px; height: 24px; display: flex; align-items: center; justify-content: center; }
.tb svg { width: 18px; height: 18px; }
.more { width: 13px; height: 24px; display: flex; align-items: flex-end; justify-content: center; padding-bottom: 1px; }
.more svg { width: 6px; height: 6px; }
.combo { display: flex; align-items: center; height: 24px; border: 1px solid #434345; background: #2d2d30; }
.combo.dark { background: #232525; }
.combo.off { color: #5c5e5e; }
.combo select { flex: 1; min-width: 0; height: 22px; border: 0; padding: 0 0 0 4px; background: none; appearance: none; text-overflow: clip; opacity: 1; font-size: 11px; }
.combo .caret { width: 19px; height: 22px; display: flex; align-items: center; justify-content: center; background: #3f3f42; pointer-events: none; }
.combo.off .caret { background: #2f3131; }
.caret svg { width: 10px; height: 6px; }
.w240 { width: 240px; }
.w175 { width: 175px; }
.w160 { width: 160px; }
.w100 { width: 100px; }
.w70 { width: 70px; }
.st { width: 14px; height: 14px; margin-left: 3px; }
.bulb { width: 10px; margin-left: 7px; margin-right: 1px; }
.sw { width: 12px; height: 12px; margin: 0 5px; background: #fff; border: 1px solid #000; }
.white { width: 40px; height: 14px; margin: 0 1px 0 4px; background: #fff; border: 1px solid #000; }
.rule { width: 60px; height: 1px; margin: 0 6px 0 4px; background: #c8c8c8; }
.rule.long { width: 80px; margin-right: 2px; }

/* work area */
main { flex: 1; display: flex; min-height: 0; }
.ptitle { display: flex; align-items: center; height: 23px; padding: 0 6px 0 13px; background: #1b1b1b; }
.ptitle h2 { flex: 1; padding-bottom: 3px; font: 13px/20px "Liberation Sans", sans-serif; color: #bcbcbc; }
.ptitle button { height: 16px; width: 16px; display: flex; align-items: center; justify-content: center; color: #fff; }
.pin { width: 8px; height: 10px; }
.cx { width: 9px; height: 9px; }

.lib { width: 301px; display: flex; flex-direction: column; background: #262828; border-right: 1px solid #000; }
.cols { display: flex; height: 18px; margin: 0 6px 0 1px; background: #2f3131; line-height: 18px; font-size: 12px; }
.c1 { flex: 1; padding-left: 4px; border-right: 1px solid #222424; }
.c2 { width: 60px; padding-left: 5px; border-right: 1px solid #222424; }
.tree { list-style: none; margin-top: 1px; font-size: 11px; }
.tree li { display: flex; align-items: center; gap: 6px; height: 18px; background: #1b1d1d; position: relative; }
.tree .ni { width: 14px; height: 14px; }
.tree .r0 { padding-left: 13px; background: #262828; }
.tree .r1 { padding-left: 25px; background: #212323; }
.tree .r2 { padding-left: 37px; }
.open::before { content: ""; position: absolute; left: 5px; top: 6px; width: 7px; height: 7px; background: linear-gradient(135deg, transparent 50%, #c2085e 50%); }
.has::before { content: ""; position: absolute; left: 18px; top: 5px; border: 4px solid transparent; border-left: 5px solid #d0d0d0; border-right: 0; }
.tag::after { content: ""; position: absolute; left: 36px; top: 1px; border-top: 5px solid #1287e0; border-right: 5px solid transparent; }
.r1.tag::after { left: 24px; }
.tag.gold::after { border-top-color: #e0a010; }
.ltabs { display: flex; height: 24px; margin-top: auto; background: #1b1b1b; }
.ltabs button { padding: 0 6px 0 5px; color: #bdbdbd; font-size: 11px; }
.ltabs .on { background: #454545; border-top: 1px solid #c2085e; }
.arrows { display: flex; align-items: center; gap: 10px; margin-left: auto; padding-right: 5px; }
.arrows svg { width: 8px; height: 10px; }

.work { flex: 1; min-width: 0; display: flex; flex-direction: column; }
.dtabs { display: flex; align-items: flex-end; gap: 1px; height: 25px; padding: 0 5px 1px 1px; }
.dtabs button { height: 22px; padding: 0 7px; background: #2b2d2d; display: flex; align-items: center; gap: 10px; color: #b8bcc0; font-size: 11px; }
.dtabs .on { background: #434343; font-weight: bold; color: #bfbfbf; }
.dtabs .add { width: 16px; padding: 0 3px; }
.dtabs .add svg { width: 10px; height: 10px; }
.dtabs .all { margin-left: auto; background: none; padding: 0; width: 11px; color: #fff; }
.dtabs .all svg { width: 10px; height: 6px; }
.frame { flex: 1; min-height: 0; background: #000; border: solid #3c3c3c; border-width: 0 2px; }
.drawing { width: 100%; height: 100%; }
.wht { stroke: #fff; }
.blu { stroke: #00f; }
.brn { stroke: #9f844a; }
.sal { stroke: #ff9f7f; }
.yel { stroke: #ff0; }
.sky { stroke: #00bfff; }
.w2 { stroke-width: 2px; }
.note { fill: #00f; font: bold 9px "Noto Sans", sans-serif; }
.note.white { fill: #fff; }
.note .sup { font-size: 7px; }

.mtabs { display: flex; align-items: center; gap: 2px; height: 21px; padding: 0 0 2px 2px; background: #1b1b1d; border: solid #3c3c3c; border-width: 0 2px; }
.nav { width: 16px; height: 16px; display: flex; align-items: center; justify-content: center; background: #2d2f31; }
.nav svg { width: 10px; height: 10px; }
.mt { height: 17px; padding: 0 24px 0 8px; background: #232525; color: #858585; font-size: 11px; clip-path: polygon(0 0, 100% 0, calc(100% - 16px) 100%, 0 100%); }
.mt + .mt { margin-left: -14px; }
.mt.on { margin-left: 1px; padding: 0 18px 0 5px; background: #484848; color: #d0d0d0; font-weight: bold; }
.cmd { height: 87px; padding: 2px 1px 2px 14px; background: #1f2121; border-top: 1px solid #4a4c4c; }
.log { height: 67px; padding: 1px 0 0 2px; background: #262828; font: 14px/16px "Liberation Sans", sans-serif; color: #c8c8c8; white-space: pre; overflow: hidden; }
.prompt { display: flex; align-items: center; height: 15px; margin-top: 1px; padding-left: 4px; gap: 3px; background: #262828; font: 14px/15px "Liberation Sans", sans-serif; color: #c8c8c8; }
.prompt svg { width: 25px; height: 15px; }
.prompt input { flex: 1; height: 15px; border: 0; padding: 0; background: none; outline: 0; }

/* tutorial */
.tut { width: 287px; display: flex; flex-direction: column; background: #2d2f2f; border-left: 1px solid #000; }
.tbody { padding: 9px 11px; color: #fff; }
.tbody h1 { font-size: 18px; line-height: 23px; }
.sub { font-size: 13px; line-height: 20px; }
.intro { margin-top: 24px; font-size: 13px; line-height: 17px; }
.tbody ol { list-style: none; margin-top: 16px; padding: 0 26px 0 33px; }
.tbody li { display: flex; height: 49px; align-items: center; font-size: 16px; }
.tbody b { width: 22px; text-align: center; font-weight: 500; }
.tbody a { flex: 1; text-align: center; color: #fff; text-decoration: none; }

.side { width: 28px; background: #1b1b1b; }
.sidebar { display: flex; flex-direction: column; align-items: center; height: 407px; background: #262828; }
.hgrip { width: 18px; height: 4px; margin: 3px 0; background: repeating-conic-gradient(#4c4e4e 0 25%, #262828 0 50%) 0 0 / 2px 2px; }
.smore { align-self: flex-end; padding: 4px 3px; }
.smore svg { width: 6px; height: 6px; }

/* status bar */
.status { display: flex; justify-content: flex-end; height: 24px; padding: 3px 10px 0 0; background: #262828; }
.status output { line-height: 21px; padding-right: 2px; font-size: 11px; }
.status button { width: 26px; display: flex; align-items: center; justify-content: center; }
.status .on { background: #4c4e4e; }
.status svg { width: 18px; height: 18px; }
```
